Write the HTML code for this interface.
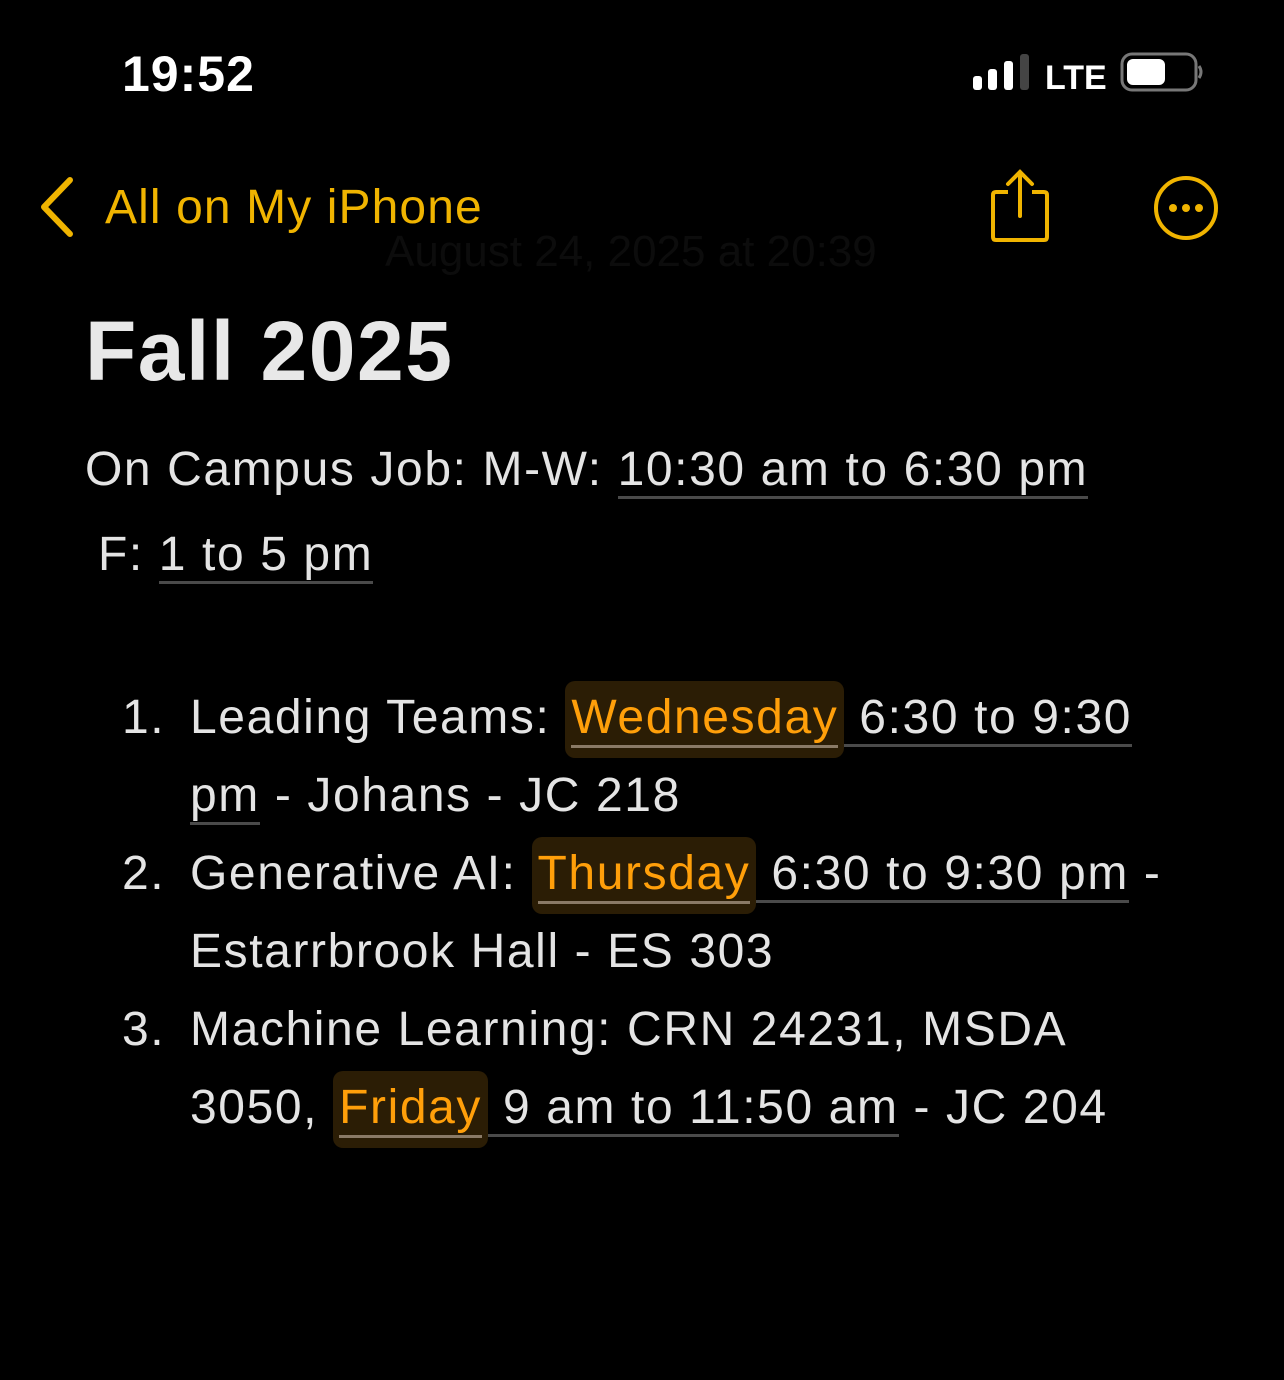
<!DOCTYPE html>
<html><head><meta charset="utf-8"><style>
html,body{margin:0;padding:0;background:#000;}
body{width:1284px;height:1380px;position:relative;overflow:hidden;font-family:"Liberation Sans",sans-serif;color:#e4e4e4;}
.l{position:absolute;font-size:48px;line-height:48px;white-space:nowrap;letter-spacing:1.6px;}
.u{border-bottom:3px solid #4a4a4a;}
.h{color:#ff9f0a;background:#2b1d05;border-radius:10px;padding:10px 6px 14px;position:relative;}
.h:after{content:"";position:absolute;left:6px;right:6px;bottom:10px;height:3px;background:#8a7a66;}
.y{color:#f0b400;}
</style></head><body>
<div style="position:absolute;left:122px;top:46px;font-size:50px;font-weight:bold;color:#fff;line-height:56px;letter-spacing:1px;">19:52</div>
<svg style="position:absolute;left:970px;top:52px" width="240" height="44">
<rect x="3" y="24" width="9" height="14" rx="3" fill="#fff"/>
<rect x="18" y="17" width="9" height="21" rx="3" fill="#fff"/>
<rect x="34" y="9" width="9" height="29" rx="3" fill="#fff"/>
<rect x="50" y="2" width="9" height="36" rx="3" fill="#444"/>
<text x="75" y="37" font-family="Liberation Sans" font-weight="bold" font-size="34" fill="#fff">LTE</text>
<rect x="152" y="2" width="74" height="36" rx="10" fill="none" stroke="#777" stroke-width="3"/>
<rect x="157" y="7" width="38" height="26" rx="6" fill="#fff"/>
<path d="M229 14 Q233 20 229 26" stroke="#777" stroke-width="3" fill="none"/>
</svg>
<svg style="position:absolute;left:36px;top:176px" width="40" height="62"><path d="M34 4 L8 31 L34 58" stroke="#f0b400" stroke-width="6" fill="none" stroke-linecap="round" stroke-linejoin="round"/></svg>
<div class="l y" style="left:105px;top:184px;font-size:48px;letter-spacing:1.1px;">All on My iPhone</div>
<div class="l" style="left:385px;top:228px;font-size:44px;color:#0c0c0c;letter-spacing:0;">August 24, 2025 at 20:39</div>
<svg style="position:absolute;left:988px;top:166px" width="64" height="78"><path d="M20 26 H8 Q5 26 5 29 V71 Q5 74 8 74 H56 Q59 74 59 71 V29 Q59 26 56 26 H44" stroke="#f0b400" stroke-width="4" fill="none"/><path d="M32 50 V6 M20 18 L32 6 L44 18" stroke="#f0b400" stroke-width="4" fill="none" stroke-linecap="round"/></svg>
<svg style="position:absolute;left:1150px;top:172px" width="72" height="72"><circle cx="36" cy="36" r="30" stroke="#f0b400" stroke-width="4" fill="none"/><circle cx="23" cy="36" r="4" fill="#f0b400"/><circle cx="36" cy="36" r="4" fill="#f0b400"/><circle cx="49" cy="36" r="4" fill="#f0b400"/></svg>
<div class="l" style="left:85px;top:306px;font-size:84px;line-height:90px;font-weight:bold;color:#e8e8e8;letter-spacing:1.5px;">Fall 2025</div>
<div class="l" style="left:85px;top:446px;">On Campus Job: M-W: <span class="u">10:30 am to 6:30 pm</span></div>
<div class="l" style="left:98px;top:531px;">F: <span class="u">1 to 5 pm</span></div>
<div class="l" style="left:122px;top:694px;">1.</div>
<div class="l" style="left:190px;top:694px;">Leading Teams: <span class="h">Wednesday</span><span class="u"> 6:30 to 9:30</span></div>
<div class="l" style="left:190px;top:772px;"><span class="u">pm</span> - Johans - JC 218</div>
<div class="l" style="left:122px;top:850px;">2.</div>
<div class="l" style="left:190px;top:850px;">Generative AI: <span class="h">Thursday</span><span class="u"> 6:30 to 9:30 pm</span> -</div>
<div class="l" style="left:190px;top:928px;">Estarrbrook Hall - ES 303</div>
<div class="l" style="left:122px;top:1006px;">3.</div>
<div class="l" style="left:190px;top:1006px;">Machine Learning: CRN 24231, MSDA</div>
<div class="l" style="left:190px;top:1084px;">3050, <span class="h">Friday</span><span class="u"> 9 am to 11:50 am</span> - JC 204</div>
</body></html>
